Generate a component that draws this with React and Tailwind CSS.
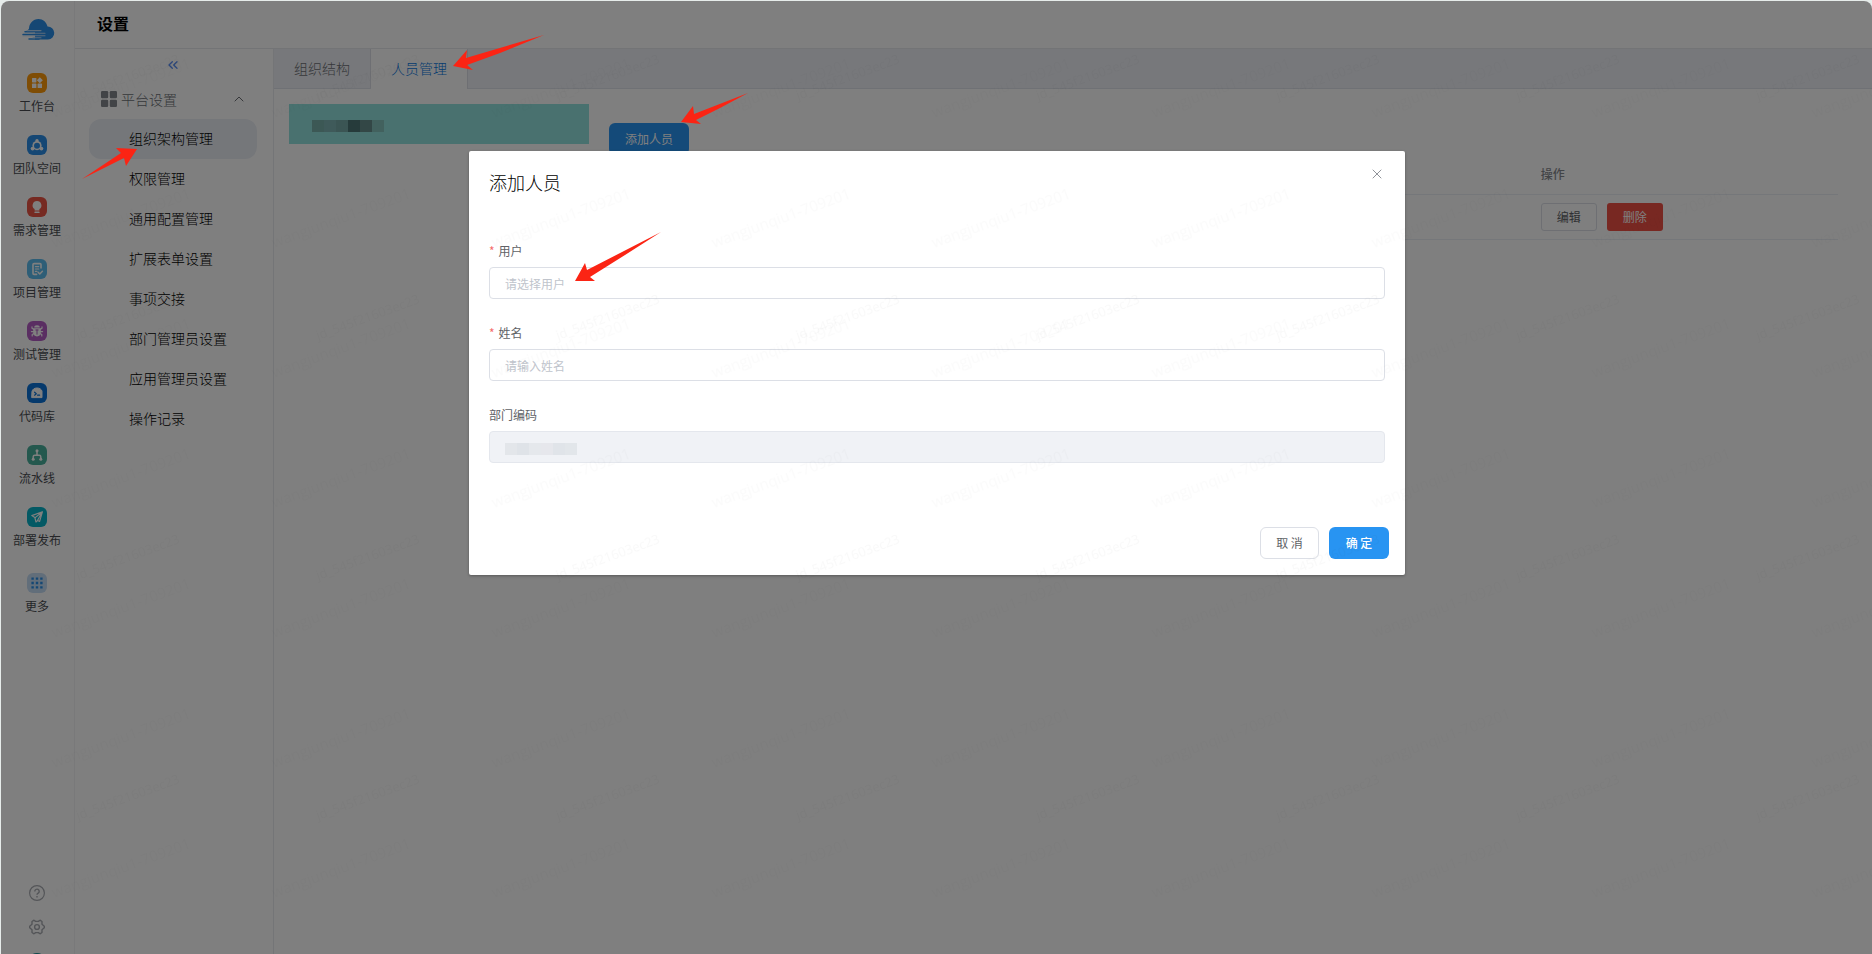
import React from 'react';
import { ChevronUp, ChevronsLeft, X } from 'lucide-react';

const navItems = [
  { label: '工作台', color: 'bg-[#ff9a0a]', icon: 'grid' },
  { label: '团队空间', color: 'bg-[#2b8fe8]', icon: 'team' },
  { label: '需求管理', color: 'bg-[#ec5444]', icon: 'bulb' },
  { label: '项目管理', color: 'bg-[#5cbcee]', icon: 'doc' },
  { label: '测试管理', color: 'bg-[#b45cc4]', icon: 'bug' },
  { label: '代码库', color: 'bg-[#0a72d8]', icon: 'code' },
  { label: '流水线', color: 'bg-[#48b09c]', icon: 'flow' },
  { label: '部署发布', color: 'bg-[#06b2c8]', icon: 'plane' },
];

const menuItems = [
  '组织架构管理',
  '权限管理',
  '通用配置管理',
  '扩展表单设置',
  '事项交接',
  '部门管理员设置',
  '应用管理员设置',
  '操作记录',
];

const NavIcon = ({ name }) => (
  <svg className="w-5 h-5" viewBox="0 0 20 20" fill="none" stroke="white" strokeLinecap="round" strokeLinejoin="round">
    {name === 'grid' && (
      <g fill="white" stroke="none">
        <rect x="5" y="5" width="4.4" height="4.4" rx="0.6" />
        <rect x="5" y="10.6" width="4.4" height="4.4" rx="0.6" />
        <rect x="10.6" y="10.6" width="4.4" height="4.4" rx="0.6" />
        <path d="M12.8 4.2l3 3-3 3-3-3z" />
      </g>
    )}
    {name === 'team' && (
      <>
        <g fill="white" stroke="none">
          <circle cx="10" cy="10.6" r="4.6" />
          <circle cx="10" cy="5.8" r="1.7" />
          <circle cx="5.6" cy="13.6" r="1.9" />
          <circle cx="14.4" cy="13.6" r="1.9" />
        </g>
        <circle cx="10" cy="10.8" r="3" fill="#2b8fe8" stroke="none" />
      </>
    )}
    {name === 'bulb' && (
      <g fill="white" stroke="none">
        <path d="M10 4a4.4 4.4 0 0 0-2.4 8.1v1.4h4.8v-1.4A4.4 4.4 0 0 0 10 4z" />
        <rect x="7.4" y="14.4" width="5.2" height="1.6" rx="0.6" />
      </g>
    )}
    {name === 'doc' && (
      <>
        <path d="M14 9V5.6a1 1 0 0 0-1-1H7a1 1 0 0 0-1 1v8.8a1 1 0 0 0 1 1h2.6" strokeWidth="1.6" />
        <path d="M8.4 7.6h3.4M8.4 10h3.4M8.4 12.4h1.6" strokeWidth="1.1" />
        <path d="M11.2 13.4l1.6 1.6 2.6-2.8" strokeWidth="1.5" />
      </>
    )}
    {name === 'bug' && (
      <>
        <path d="M7.2 6.6a2.8 2.4 0 0 1 5.6 0z" fill="white" stroke="none" />
        <path d="M6.2 7.2h7.6v4.4a3.8 3.8 0 0 1-7.6 0z" fill="white" stroke="none" />
        <path d="M7 8.6L5 7.2V5.8M13 8.6l2-1.4V5.8M6.6 10.6H4.4M13.4 10.6h2.2M7 12.6l-1.8 1v1.4M13 12.6l1.8 1v1.4" strokeWidth="1.2" />
        <path d="M8.8 9h2.4M10 9v4.2" stroke="#b45cc4" strokeWidth="1" />
      </>
    )}
    {name === 'code' && (
      <>
        <path d="M5 8.2C5.4 6.4 7.4 5 10 5s4.6 1.4 5 3.2v6.4H5z" fill="white" strokeWidth="1" />
        <path d="M7.6 9.2l1.7 1.5-1.7 1.5M10.6 12.2h2" stroke="#0a72d8" strokeWidth="1.2" />
      </>
    )}
    {name === 'flow' && (
      <>
        <path d="M10 6v3.8M6.2 14v-2.2a1.6 1.6 0 0 1 1.6-1.6h4.400a1.6 1.6 0 0 1 1.6 1.6V14" strokeWidth="1.5" />
        <circle cx="10" cy="5.8" r="1.5" fill="white" stroke="none" />
        <circle cx="6.2" cy="14.2" r="1.5" fill="white" stroke="none" />
        <circle cx="13.8" cy="14.2" r="1.5" fill="white" stroke="none" />
      </>
    )}
    {name === 'plane' && (
      <path d="M15.4 4.8L4.8 8.6l3 1.8 1.2 4.6 1.8-1.6 1.8 1zM15.4 4.8l-7.2 5.8M15.4 4.8l-4.8 8.4" strokeWidth="1.2" />
    )}
    {name === 'more' && (
      <path d="M5.6 5.6h0M10 5.6h0M14.4 5.6h0M5.6 10h0M10 10h0M14.4 10h0M5.6 14.4h0M10 14.4h0M14.4 14.4h0" stroke="#2b8fe8" strokeWidth="2.4" strokeLinecap="square" />
    )}
  </svg>
);

const Logo = () => (
  <svg className="w-[34px] h-[22px]" viewBox="0 0 34 22" fill="none">
    <path d="M8 10C8 4.500 12 0 17.500 0c4.500 0 8 3 9 7.500A6.500 6.500 0 0 1 27 20.500H14V10z" fill="#2b8fe8" />
    <path d="M8 10.500h11M4 12.800h12M2 15.400h12M8 20h10" stroke="#2b8fe8" strokeWidth="1.500" strokeLinecap="round" />
    <path d="M6 11.600h14M12 14.200h12M2 16.800h22M12 18.800h8" stroke="#b8d8f6" strokeWidth="1.100" strokeLinecap="round" />
  </svg>
);

const NavRail = () => (
  <nav className="w-[74px] shrink-0 flex flex-col items-center pr-px border-r border-[#f2f2f4] overflow-hidden">
    <div className="mt-[18px] h-[22px] mb-8 pl-0.5">
      <Logo />
    </div>
    {navItems.map((item) => (
      <a key={item.label} href="#" className="h-[62px] shrink-0 flex flex-col items-center text-xs leading-5 text-[#4a4d52]">
        <span className={`w-5 h-5 mb-[3px] rounded-md ${item.color}`}>
          <NavIcon name={item.icon} />
        </span>
        {item.label}
      </a>
    ))}
    <a href="#" className="mt-1 flex flex-col items-center text-xs leading-5 text-[#4a4d52]">
      <span className="w-5 h-5 mb-[3px] rounded-md bg-[#c4dcf4]">
        <NavIcon name="more" />
      </span>
      更多
    </a>
    <div className="mt-auto h-[69px] shrink-0 flex flex-col items-center gap-[18px]">
      <button type="button" aria-label="帮助" className="h-4">
        <svg className="w-4 h-4" viewBox="0 0 16 16" fill="none" stroke="#a8abb1" strokeWidth="1.2">
          <circle cx="8" cy="8" r="7.4" />
          <path d="M5.800 6.400a2.200 2.200 0 1 1 3.400 1.800c-.8.5-1.200.9-1.200 1.600M8 11v1.400" strokeWidth="1.400" />
        </svg>
      </button>
      <button type="button" aria-label="系统设置" className="h-4">
        <svg className="w-4 h-4" viewBox="0 0 16 16" fill="none" stroke="#a8abb1" strokeWidth="1.4" strokeLinejoin="round">
          <path d="M5 1.200l1.600 1.200h2.800L11 1.200l2 1.300v2.700l2.300 2v1.600l-2.300 2v2.700l-2 1.300-1.600-1.200H6.600L5 14.800l-2-1.300v-2.700L.7 8.800V7.200l2.300-2V2.500z" />
          <circle cx="8" cy="8" r="2.400" />
        </svg>
      </button>
      <span className="w-5 h-5 shrink-0 rounded-full bg-[#1f8f96]" />
    </div>
  </nav>
);

const SideMenu = () => (
  <aside className="w-[199px] shrink-0 border-r border-[#e9eaee]">
    <button type="button" aria-label="收起" className="mt-2 w-full h-4 pr-0.5 flex items-center justify-center text-[#5a8ff5]">
      <ChevronsLeft className="w-4 h-4" strokeWidth={2} />
    </button>
    <button type="button" className="mt-[6px] h-10 w-full pl-[26px] pr-[26px] flex items-center text-sm font-light text-[#6c6f75]">
      <svg className="w-4 h-4 mr-1" viewBox="0 0 16 16" fill="#85888e">
        <rect width="7.200" height="7.200" rx="1.200" />
        <rect x="8.800" width="7.200" height="7.200" rx="1.200" />
        <rect y="8.800" width="7.200" height="7.200" rx="1.200" />
        <rect x="8.800" y="8.800" width="7.200" height="7.200" rx="1.200" />
      </svg>
      平台设置
      <ChevronUp className="w-4 h-4 ml-auto" strokeWidth={1.5} />
    </button>
    <ul className="pl-[14px] pr-[16px] text-sm font-light text-black">
      {menuItems.map((item, i) => (
        <li key={item}>
          <a href="#" className={`h-10 pl-10 pb-0.5 flex items-center rounded-xl ${i === 0 ? 'bg-[#ebeff5]' : ''}`}>
            {item}
          </a>
        </li>
      ))}
    </ul>
  </aside>
);

const Content = () => (
  <main className="flex-1 min-w-0">
    <div className="h-10 flex bg-[#eff1f6] border-b border-[#dfe2ea] text-sm font-light">
      <button type="button" className="w-[97px] pb-0.5 border-r border-[#dcdfe6] text-[#6c6f75]">组织结构</button>
      <button type="button" className="w-[97px] h-10 pb-0.5 bg-white border-r border-[#dcdfe6] text-[#0a78e0]">人员管理</button>
    </div>
    <div className="pt-[15px] pl-[15px] pr-[34px] flex">
      <div className="w-[300px] h-10 shrink-0 pl-[23px] flex items-center bg-[#93e3df]">
        <div className="mt-1 flex h-3">
          <span className="w-3 bg-[#78b0ab]" />
          <span className="w-3 bg-[#7fb4b5]" />
          <span className="w-3 bg-[#77aaa8]" />
          <span className="w-3 bg-[#4c7676]" />
          <span className="w-3 bg-[#668f8c]" />
          <span className="w-3 bg-[#85c2bd]" />
        </div>
      </div>
      <div className="flex-1 pl-5 pt-[19px]">
        <button type="button" className="h-8 w-20 rounded-md bg-[#2894f2] text-xs text-white">添加人员</button>
        <table className="w-full text-xs text-left">
          <thead>
            <tr className="h-[39px] border-b border-[#ebeef5] text-[#85888e]">
              <th className="w-3/4" />
              <th className="pl-[10px] font-medium">操作</th>
            </tr>
          </thead>
          <tbody>
            <tr className="h-[45px] border-b border-[#ebeef5]">
              <td />
              <td className="pl-[10px]">
                <div className="flex gap-[10px]">
                  <button type="button" className="w-14 h-7 rounded-[3px] border border-[#dcdfe6] text-[#606266]">编辑</button>
                  <button type="button" className="w-14 h-7 rounded-[3px] bg-[#f05045] text-white">删除</button>
                </div>
              </td>
            </tr>
          </tbody>
        </table>
      </div>
    </div>
  </main>
);

const Field = ({ id, label, required, children }) => (
  <div className="mb-[18px]">
    <label htmlFor={id} className="h-8 flex items-center text-xs text-[#606266]">
      {required && <span className="mr-1 text-[#f56c6c]">*</span>}
      {label}
    </label>
    {children}
  </div>
);

const AddPersonDialog = () => (
  <div role="dialog" aria-label="添加人员" className="w-1/2 ml-0.5 mt-[151px] bg-white rounded-xs shadow-[0_1px_3px_rgba(0,0,0,0.3)]">
    <div className="px-5 pt-[19px] flex items-start justify-between">
      <h2 className="text-lg leading-6 font-light text-black">添加人员</h2>
      <button type="button" aria-label="关闭" className="-mt-1 text-[#909399]">
        <X className="w-4 h-4" strokeWidth={1.5} />
      </button>
    </div>
    <form className="px-5 pt-[41px]">
      <Field id="user" label="用户" required>
        <input id="user" type="text" placeholder="请选择用户" className="block w-full h-8 px-[15px] border border-[#dcdfe6] rounded text-xs placeholder:text-[#c0c4cc]" />
      </Field>
      <Field id="name" label="姓名" required>
        <input id="name" type="text" placeholder="请输入姓名" className="block w-full h-8 px-[15px] border border-[#dcdfe6] rounded text-xs placeholder:text-[#c0c4cc]" />
      </Field>
      <Field id="dept" label="部门编码">
        <div className="relative">
          <input id="dept" type="text" disabled className="block w-full h-8 px-[15px] border border-[#e4e7ed] rounded bg-[#f0f2f6] text-xs" />
          <div className="absolute left-4 top-3 h-3 flex">
            <span className="w-3 bg-[#e3e6ea]" />
            <span className="w-3 bg-[#dfe3e8]" />
            <span className="w-3 bg-[#e5e8ec]" />
            <span className="w-3 bg-[#e6e7ec]" />
            <span className="w-3 bg-[#e0e4e9]" />
            <span className="w-3 bg-[#e2e6ea]" />
          </div>
        </div>
      </Field>
    </form>
    <div className="pt-[46px] pb-4 pr-4 flex justify-end gap-[10px] text-xs">
      <button type="button" className="w-[59px] h-8 border border-[#dcdfe6] rounded-md text-[#606266]">取 消</button>
      <button type="button" className="w-[60px] h-8 rounded-md bg-[#2894f2] font-medium text-white">确 定</button>
    </div>
  </div>
);

// Repeating account watermark laid over the whole page
const Watermark = () => (
  <svg className="absolute inset-0 w-full h-full pointer-events-none" aria-hidden="true">
    <defs>
      <pattern id="wm-name" x="48" y="8" width="220" height="130" patternUnits="userSpaceOnUse">
        <text x="6" y="110" transform="rotate(-20 6 110)" fontSize="15" fillOpacity="0.014" fontFamily="Open Sans, sans-serif">wangjunqiu1-709201</text>
      </pattern>
      <pattern id="wm-id" x="70" y="0" width="240" height="240" patternUnits="userSpaceOnUse">
        <text x="8" y="100" transform="rotate(-20 8 100)" fontSize="13" fillOpacity="0.024" fontFamily="Open Sans, sans-serif">jd_545f21603ec23</text>
      </pattern>
    </defs>
    <rect width="100%" height="100%" fill="url(#wm-name)" />
    <rect width="100%" height="100%" fill="url(#wm-id)" />
  </svg>
);

// Red pointers that mark the steps to follow
const Arrows = () => (
  <svg className="absolute inset-0 w-full h-full pointer-events-none" fill="#fb2414" aria-hidden="true">
    <path d="M82 179L121 153L116 148L137 149L126 166L124 158z" />
    <path d="M544 35L466 58L467 50L453 66L473 70L467 65L500 53z" />
    <path d="M748 93L694 114L693 106L681 122L701 124L696 120L720 108z" />
    <path d="M661 232L587 270L585 263L575 281L595 281L590 277L625 255z" />
  </svg>
);

export default function App() {
  return (
    <div className="relative h-screen overflow-hidden bg-[#e6ecea] font-['Noto_Sans_CJK_SC','Liberation_Sans',sans-serif]">
      <div className="h-full pl-px pt-px">
        <div className="relative h-full flex rounded-t-lg overflow-hidden bg-white">
          <NavRail />
          <div className="flex-1 min-w-0 flex flex-col">
            <header className="h-12 shrink-0 pl-[22px] pb-1 flex items-center border-b border-[#e6e8ec]">
              <h1 className="text-base font-bold text-black">设置</h1>
            </header>
            <div className="flex-1 flex">
              <SideMenu />
              <Content />
            </div>
          </div>
          <div className="absolute inset-0 bg-black/50" />
        </div>
      </div>
      <div className="absolute inset-0 flex justify-center items-start">
        <AddPersonDialog />
      </div>
      <Watermark />
      <Arrows />
    </div>
  );
}
